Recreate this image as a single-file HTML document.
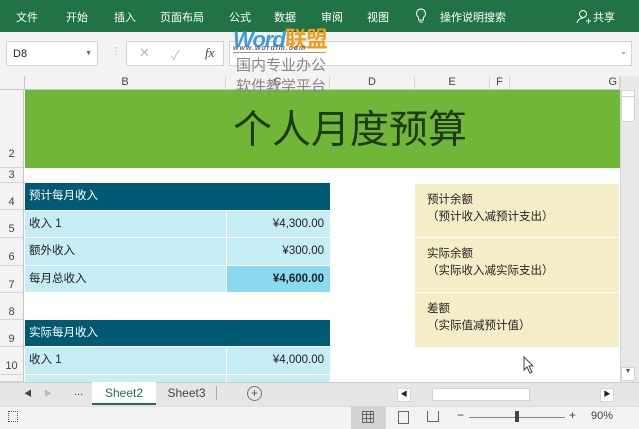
<!DOCTYPE html>
<html><head><meta charset="utf-8"><style>
*{margin:0;padding:0;box-sizing:border-box}
body{width:639px;height:429px;overflow:hidden;position:relative;background:#fff;font-family:"Liberation Sans","Noto Sans CJK SC",sans-serif;font-size:12px;color:#222}
.a{position:absolute}
.rib{left:0;top:0;width:639px;height:32px;background:#217346;color:#fff;font-size:11px}
.rib span{position:absolute;top:9px}
.fb{left:0;top:32px;width:639px;height:44px;background:#f3f3f3}
.box{background:#fff;border:1px solid #d4d4d4}
.ch{top:76px;height:14px;background:#f3f3f3;border-bottom:1px solid #c6c6c6;border-right:1px solid #d4d4d4;text-align:center;font-size:11px;color:#444;line-height:13px}
.rh{left:0;width:24px;background:#f3f3f3;border-right:1px solid #c6c6c6;border-bottom:1px solid #d4d4d4;font-size:11px;color:#444;text-align:center}
.cell{font-size:11.5px;line-height:27px;padding-left:4px}
</style></head><body>
<div class="a rib">
<span style="left:16px">文件</span><span style="left:66px">开始</span><span style="left:114px">插入</span><span style="left:160px">页面布局</span><span style="left:229px">公式</span><span style="left:274px">数据</span><span style="left:321px">审阅</span><span style="left:367px">视图</span>
<svg class="a" style="left:415px;top:8px" width="12" height="16" viewBox="0 0 12 16"><path d="M6 1a4.5 4.5 0 0 0-2.5 8.2V12h5V9.2A4.5 4.5 0 0 0 6 1zM4 14h4" fill="none" stroke="#fff" stroke-width="1"/></svg>
<span style="left:440px">操作说明搜索</span>
<svg class="a" style="left:576px;top:9px" width="16" height="16" viewBox="0 0 16 16"><circle cx="7" cy="5" r="3.5" fill="none" stroke="#fff"/><path d="M1 14c1-4 4-5 6-5M10 12h5M12.5 9.5v5" fill="none" stroke="#fff"/></svg>
<span style="left:593px">共享</span>
</div>
<div class="a fb"></div>
<div class="a box" style="left:6px;top:41px;width:92px;height:25px;font-size:11px;padding:6px 6px">D8<span class="a" style="right:5px;top:8px;font-size:7px;color:#666">▼</span></div>
<div class="a" style="left:111px;top:46px;color:#aaa;font-size:10px">⋮</div>
<div class="a box" style="left:126px;top:41px;width:98px;height:25px;color:#bbb;font-size:13px"><span class="a" style="left:12px;top:3px">✕</span><span class="a" style="left:44px;top:3px">✓</span><span class="a" style="left:78px;top:3px;color:#444;font-family:'Liberation Serif',serif;font-style:italic">fx</span></div>
<div class="a box" style="left:229px;top:41px;width:403px;height:25px"><span class="a" style="right:4px;top:5px;font-size:8px;color:#555">⌄</span></div>
<div class="a" style="left:233px;top:22px;font-size:22px;font-style:italic;font-weight:bold;color:#3d9be0;letter-spacing:-1px">Word<span style="color:#f39a1c;font-style:normal">联盟</span></div>
<div class="a" style="left:233px;top:45px;font-size:7px;font-style:italic;font-weight:bold;color:#666;letter-spacing:1px;border-bottom:1px solid #999;width:93px">www.wordlm.com</div>
<div class="a" style="left:236px;top:55px;font-size:15px;color:#888;line-height:21px;z-index:5">国内专业办公<br>软件教学平台</div>
<div class="a" style="left:0;top:76px;width:25px;height:14px;background:#f3f3f3;border-right:1px solid #c6c6c6;border-bottom:1px solid #c6c6c6"></div>
<div class="a ch" style="left:25px;width:201px">B</div>
<div class="a ch" style="left:226px;width:104px">C</div>
<div class="a ch" style="left:330px;width:85px">D</div>
<div class="a ch" style="left:415px;width:75px">E</div>
<div class="a ch" style="left:490px;width:20px">F</div>
<div class="a ch" style="left:510px;width:110px;text-align:right;padding-right:2px">G</div>
<div class="a" style="left:620px;top:76px;width:19px;height:306px;background:#e8e8e8;border-left:1px solid #d4d4d4"></div>
<div class="a box" style="left:621px;top:90px;width:14px;height:7px"></div>
<div class="a box" style="left:621px;top:96px;width:14px;height:26px"></div>
<div class="a box" style="left:621px;top:367px;width:14px;height:14px;font-size:7px;text-align:center;color:#555">▼</div>
<div class="a rh" style="top:90px;height:78px;line-height:128px">2</div>
<div class="a rh" style="top:168px;height:15px;line-height:15px">3</div>
<div class="a rh" style="top:183px;height:27px;line-height:38px">4</div>
<div class="a rh" style="top:210px;height:28px;line-height:38px">5</div>
<div class="a rh" style="top:238px;height:28px;line-height:38px">6</div>
<div class="a rh" style="top:266px;height:27px;line-height:38px">7</div>
<div class="a rh" style="top:293px;height:27px;line-height:38px">8</div>
<div class="a rh" style="top:320px;height:27px;line-height:38px">9</div>
<div class="a rh" style="top:347px;height:28px;line-height:38px">10</div>
<div class="a rh" style="top:375px;height:7px"></div>
<div class="a" style="left:25px;top:90px;width:595px;height:78px;background:#72b637"></div>
<div class="a" style="left:25px;top:104px;width:650px;text-align:center;font-size:39px;color:#1e3a14;line-height:54px">个人月度预算</div>
<div class="a cell" style="left:25px;top:183px;width:305px;height:27px;background:#005a73;color:#fff">预计每月收入</div>
<div class="a cell" style="left:25px;top:211px;width:201px;height:26px;background:#c6ecf4">收入 1</div>
<div class="a cell" style="left:227px;top:211px;width:103px;height:26px;background:#c6ecf4;text-align:right;padding-right:6px">¥4,300.00</div>
<div class="a cell" style="left:25px;top:238px;width:201px;height:27px;background:#c6ecf4">额外收入</div>
<div class="a cell" style="left:227px;top:238px;width:103px;height:27px;background:#c6ecf4;text-align:right;padding-right:6px">¥300.00</div>
<div class="a cell" style="left:25px;top:266px;width:201px;height:26px;background:#c6ecf4">每月总收入</div>
<div class="a cell" style="left:227px;top:266px;width:103px;height:26px;background:#8ad9ee;text-align:right;padding-right:6px;font-weight:bold">¥4,600.00</div>
<div class="a cell" style="left:25px;top:320px;width:305px;height:26px;background:#005a73;color:#fff">实际每月收入</div>
<div class="a cell" style="left:25px;top:347px;width:201px;height:27px;background:#c6ecf4">收入 1</div>
<div class="a cell" style="left:227px;top:347px;width:103px;height:27px;background:#c6ecf4;text-align:right;padding-right:6px">¥4,000.00</div>
<div class="a" style="left:25px;top:375px;width:201px;height:7px;background:#c6ecf4"></div>
<div class="a" style="left:227px;top:375px;width:103px;height:7px;background:#c6ecf4"></div>
<div class="a" style="left:415px;top:184px;width:204px;height:53px;background:#f5edc7;font-size:11.5px;line-height:17px;padding:8px 12px">预计余额<br>（预计收入减预计支出）</div>
<div class="a" style="left:415px;top:238px;width:204px;height:54px;background:#f5edc7;font-size:11.5px;line-height:17px;padding:8px 12px">实际余额<br>（实际收入减实际支出）</div>
<div class="a" style="left:415px;top:293px;width:204px;height:54px;background:#f5edc7;font-size:11.5px;line-height:17px;padding:8px 12px">差额<br>（实际值减预计值）</div>
<svg class="a" style="left:523px;top:356px" width="12" height="18" viewBox="0 0 12 18"><path d="M1 1v13l3-3 3 6 2-1-3-6h4z" fill="#fff" stroke="#444"/></svg>
<div class="a" style="left:0;top:382px;width:639px;height:24px;background:#e6e6e6;border-top:1px solid #ccc"></div>
<div class="a" style="left:24px;top:388px;font-size:8px;color:#444">◀</div>
<div class="a" style="left:44px;top:388px;font-size:8px;color:#bbb">▶</div>
<div class="a" style="left:74px;top:386px;font-size:11px;color:#444">...</div>
<div class="a" style="left:92px;top:382px;width:64px;height:23px;background:#fff;border-bottom:2px solid #217346;color:#217346;text-align:center;line-height:22px;font-size:12px">Sheet2</div>
<div class="a" style="left:157px;top:386px;width:60px;text-align:center;font-size:12px;color:#444;border-right:1px solid #aaa">Sheet3</div>
<div class="a" style="left:247px;top:386px;width:15px;height:15px;border:1px solid #777;border-radius:50%;text-align:center;line-height:12px;color:#555">+</div>
<div class="a box" style="left:397px;top:388px;width:14px;height:14px;font-size:7px;text-align:center;line-height:12px">◀</div>
<div class="a box" style="left:432px;top:388px;width:98px;height:13px"></div>
<div class="a box" style="left:600px;top:388px;width:14px;height:14px;font-size:7px;text-align:center;line-height:12px">▶</div>
<div class="a" style="left:0;top:406px;width:639px;height:23px;background:#f3f3f3;border-top:1px solid #ddd"></div>
<div class="a" style="left:8px;top:411px;width:10px;height:11px;border:1px dotted #555"></div>
<div class="a" style="left:351px;top:406px;width:35px;height:23px;background:#d4d4d4"></div>
<div class="a" style="left:362px;top:411px;width:12px;height:12px;border:1px solid #666;background:repeating-linear-gradient(90deg,transparent 0 3px,#666 3px 4px),repeating-linear-gradient(0deg,transparent 0 3px,#666 3px 4px)"></div>
<div class="a" style="left:398px;top:411px;width:11px;height:13px;border:1px solid #666"></div>
<div class="a" style="left:427px;top:411px;width:12px;height:11px;border:1px solid #666;border-top:none"></div>
<div class="a" style="left:457px;top:408px;color:#444">−</div>
<div class="a" style="left:469px;top:417px;width:96px;height:1px;background:#888"></div>
<div class="a" style="left:515px;top:411px;width:4px;height:11px;background:#444"></div>
<div class="a" style="left:569px;top:408px;color:#444">+</div>
<div class="a" style="left:591px;top:410px;font-size:11px;color:#444">90%</div>
</body></html>
